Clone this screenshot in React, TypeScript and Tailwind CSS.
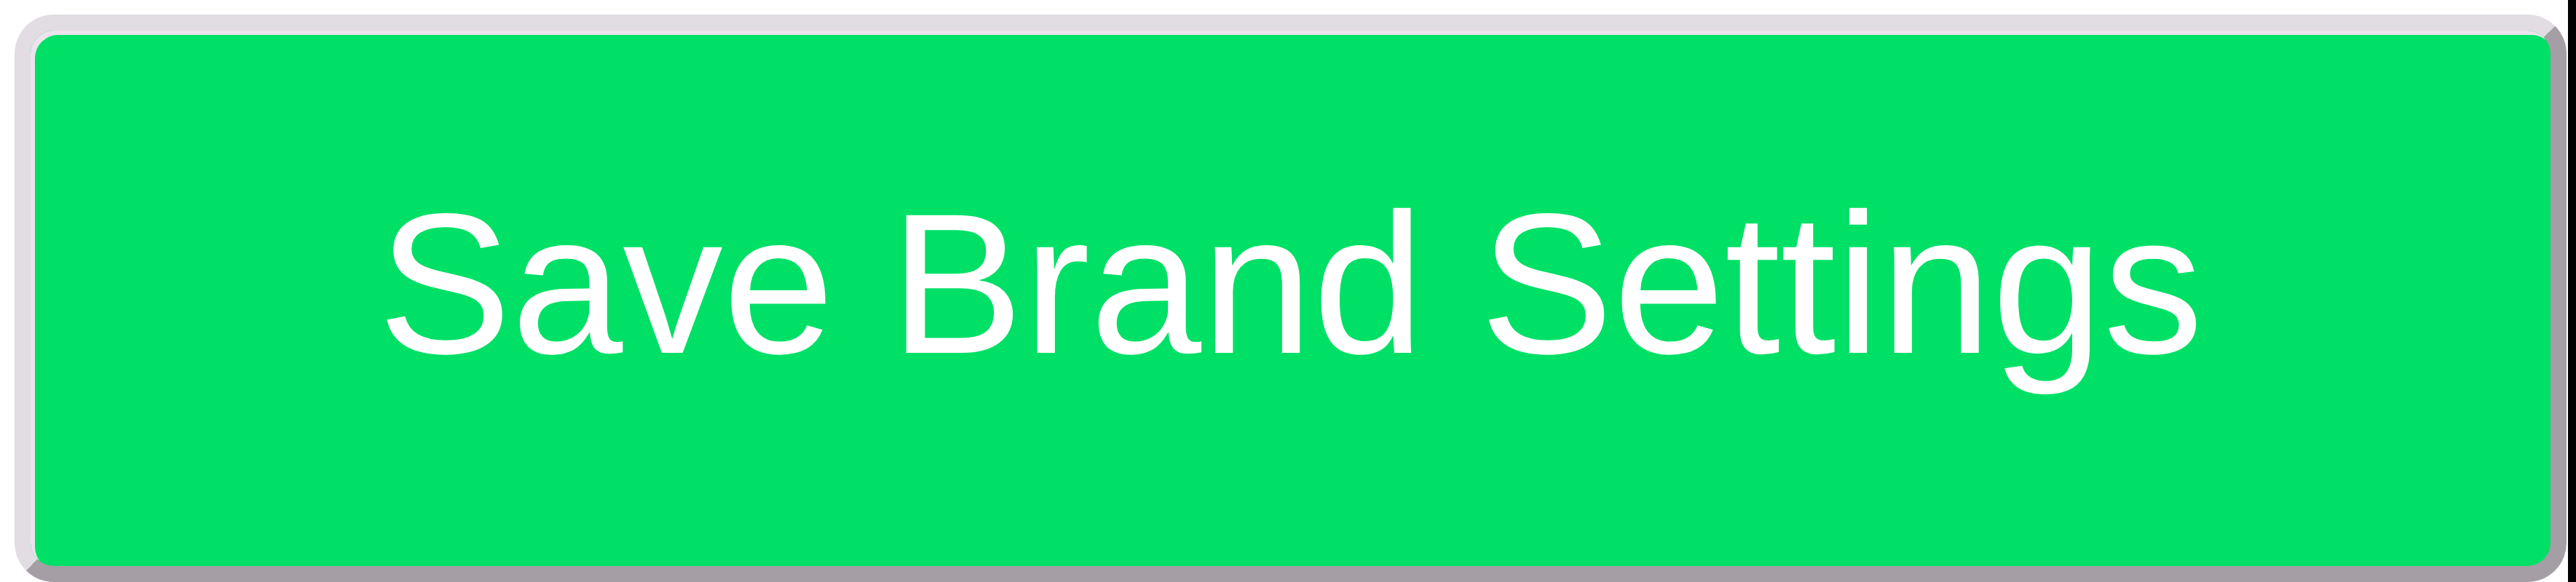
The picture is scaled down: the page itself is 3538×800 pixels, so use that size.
export default function App() {
  return (
    <div className="flex h-[800px] w-[3538px] overflow-hidden bg-white">
      <div className="flex flex-1 pl-[20px] pt-[20px] pr-[2px]">
        <button
          type="button"
          className="flex h-full w-full items-center justify-center rounded-[54px] border-[22px] border-t-[#e2dde2] border-l-[#e2dde2] border-b-[#a59ea5] border-r-[#a59ea5] bg-[#00e066] pb-[40px] text-[275px] leading-normal text-white shadow-[inset_6px_6px_0_0_#ece3ec] [font-family:'Liberation_Sans',Arial,sans-serif]"
        >
          Save Brand Settings
        </button>
      </div>
      <div className="w-[11px] bg-black" />
    </div>
  );
}
